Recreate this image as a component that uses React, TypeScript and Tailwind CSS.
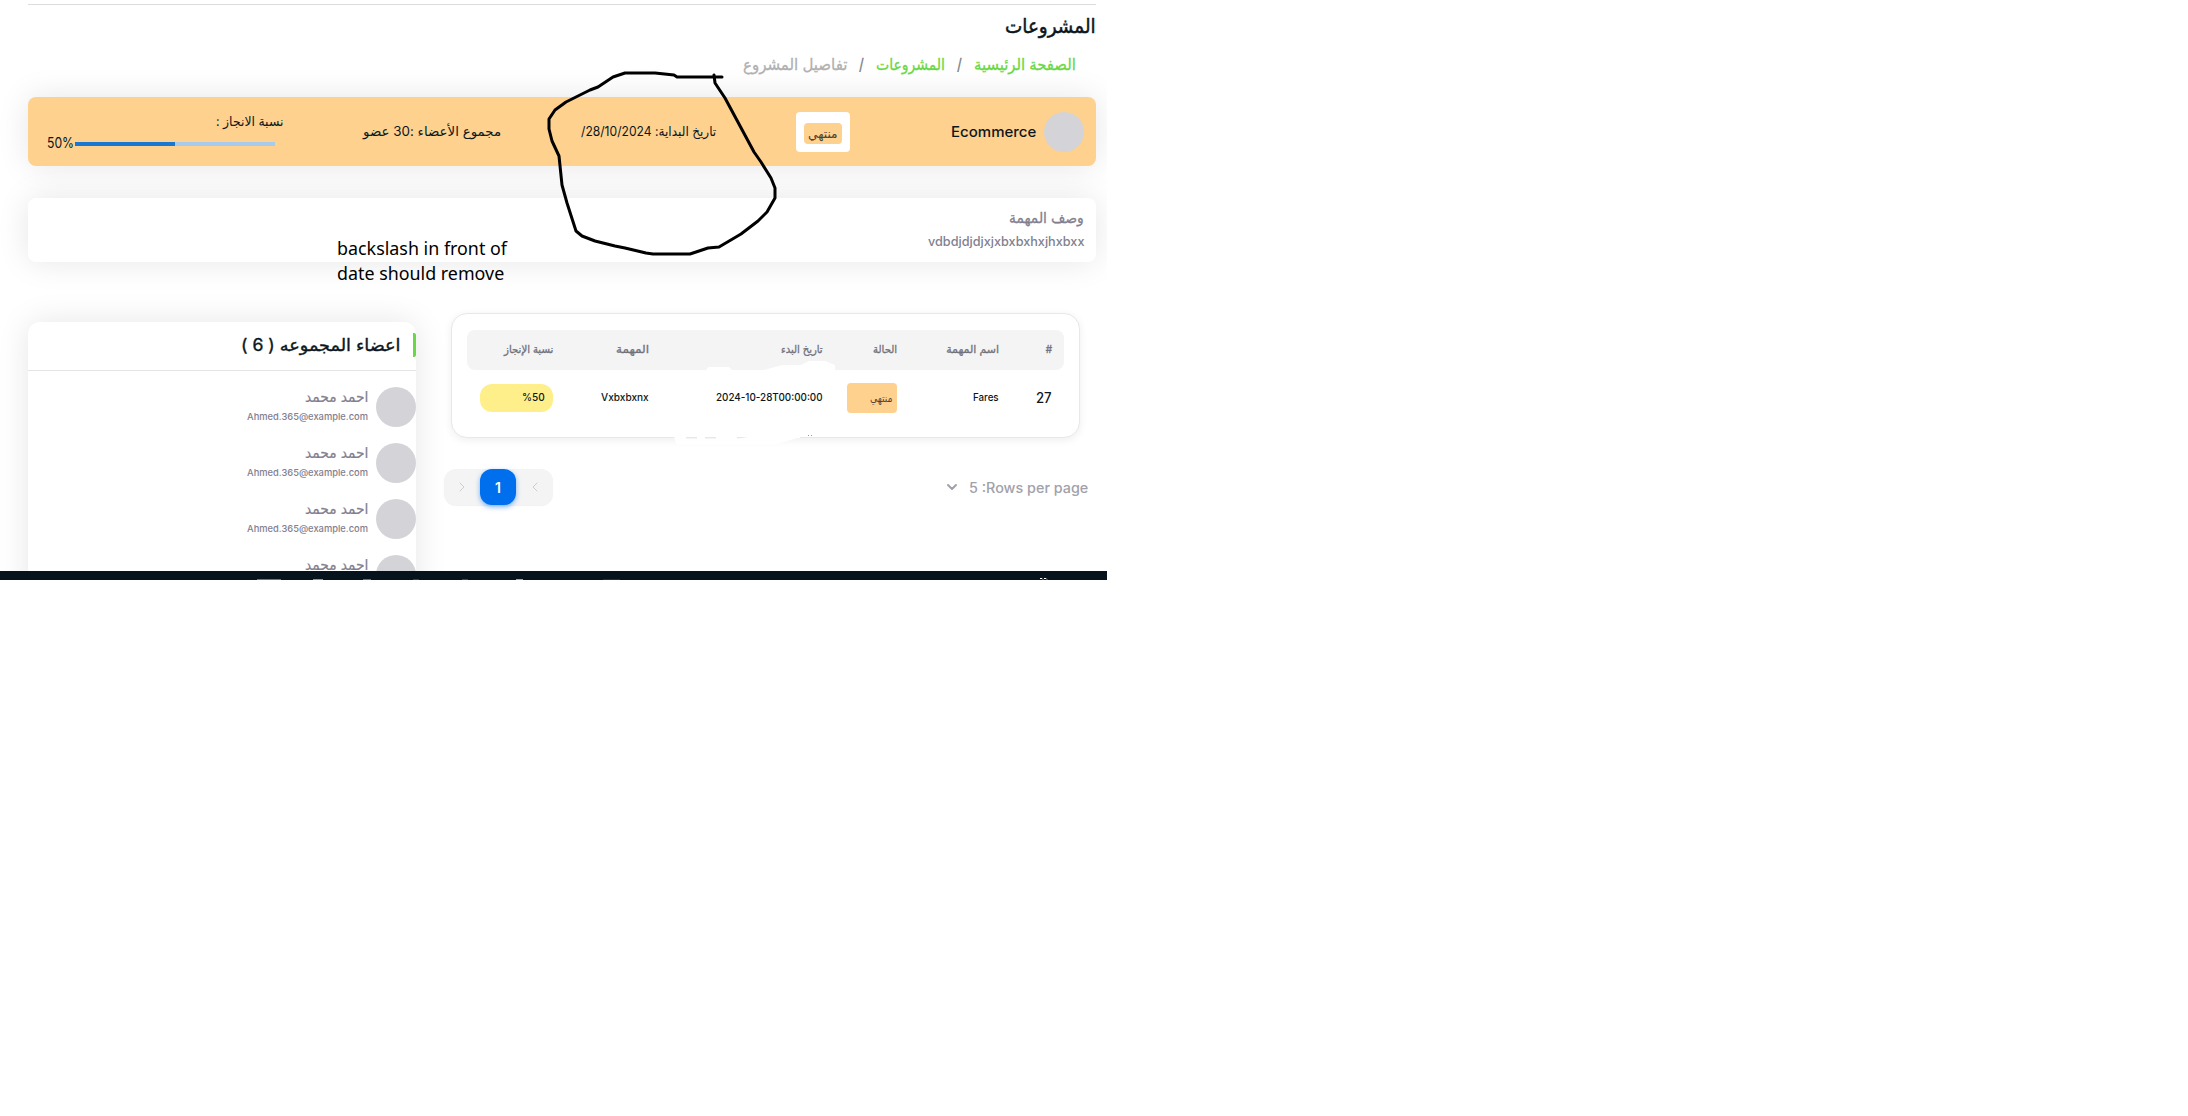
import { useLayoutEffect, useRef, type ReactNode } from "react";
import { ChevronDown, ChevronLeft, ChevronRight } from "lucide-react";

/* One line of text, condensed or widened to fill its box. */
function Fit({ className, children }: { className: string; children: ReactNode }) {
  const box = useRef<HTMLDivElement>(null);
  const text = useRef<HTMLSpanElement>(null);
  useLayoutEffect(() => {
    if (box.current && text.current) {
      text.current.style.transform = `scaleX(${box.current.clientWidth / text.current.offsetWidth})`;
    }
  }, []);
  return (
    <div ref={box} className={`flex shrink-0 justify-start whitespace-nowrap ${className}`}>
      <span ref={text} className="block shrink-0 origin-left rtl:origin-right">
        {children}
      </span>
    </div>
  );
}

const panelShadow = "shadow-[0_0_32px_rgba(0,0,0,0.1)]";

function Member() {
  return (
    <div className="flex h-10 items-center gap-2">
      <div className="size-10 shrink-0 rounded-full bg-[#d4d3d8]" />
      <div className="flex h-10 flex-col text-[#82808f]">
        <Fit className="h-5 w-[63px] text-[15px] leading-5 [-webkit-text-stroke:0.2px]">احمد محمد</Fit>
        <Fit className="h-5 w-[121px] text-[9.5px] leading-5 font-medium">Ahmed.365@example.com</Fit>
      </div>
    </div>
  );
}

export default function App() {
  return (
    <div
      dir="ltr"
      className="relative h-[1116px] w-[2188px] overflow-hidden bg-white font-['Inter','DejaVu_Sans',sans-serif] text-[#0b1720]"
    >
      <div className="h-[580px] w-[1107px] overflow-hidden">
        <div dir="rtl" className="flex h-[571px] w-[1107px] flex-col overflow-hidden pr-[11px] pl-7 pt-1">
          <div className="h-px shrink-0 bg-[#dcdcdc]" />
          <Fit className="mt-[9px] h-6 w-[91px] text-[20px] leading-6 [-webkit-text-stroke:0.5px]">المشروعات</Fit>

          <nav className="mt-[14px] mr-5 mb-px flex h-6 shrink-0 text-[16px] leading-6 text-[#68d845] [-webkit-text-stroke:0.3px]">
            <Fit className="w-[102px]">الصفحة الرئيسية</Fit>
            <Fit className="mr-3 w-[5px] text-[#777f86]">/</Fit>
            <Fit className="mr-3 w-[69px]">المشروعات</Fit>
            <Fit className="mr-3 w-[5px] text-[#777f86]">/</Fit>
            <Fit className="mr-3 w-[104px] text-[#b0b0b0]">تفاصيل المشروع</Fit>
          </nav>

          <section className={`mt-5 flex h-[69px] shrink-0 items-center rounded-lg bg-[#fed18f] pr-3 ${panelShadow}`}>
            <div className="size-10 shrink-0 rounded-full bg-[#d4d3d8]" />
            <Fit className="mr-2 w-[85px] text-[14.5px] leading-6 font-medium">Ecommerce</Fit>
            <div className="mr-[101px] flex h-10 w-[54px] shrink-0 items-center rounded-[4px] bg-white pt-[3px] pr-2">
              <div className="flex h-[21px] w-[38px] items-center justify-center rounded-[4px] bg-[#fed18f]">
                <Fit className="w-[30px] text-[13px] leading-5 text-[#4c4434]">منتهي</Fit>
              </div>
            </div>
            <Fit className="mr-20 w-[135px] pb-0.5 text-[13px] leading-6">تاريخ البداية: 28/10/2024/</Fit>
            <Fit className="mr-20 w-[138px] pb-0.5 text-[13px] leading-6">مجموع الأعضاء :30 عضو</Fit>
            <div className="mr-20 flex h-[69px] w-60 flex-col pt-3">
              <Fit className="h-6 w-[67px] text-[13px] leading-6">نسبة الانجاز :</Fit>
              <div className="mt-[3px] mr-2 flex h-4 items-center">
                <div className="flex h-1 w-[200px] justify-end bg-[#a7caed]">
                  <div className="h-1 w-1/2 bg-[#1976d2]" />
                </div>
                <Fit className="mr-px w-[27px] pb-0.5 text-[14px] leading-5">50%</Fit>
              </div>
            </div>
          </section>

          <section className={`mt-8 h-16 shrink-0 rounded-lg bg-white pt-2 pr-3 text-[#82808f] ${panelShadow}`}>
            <Fit className="w-[75px] text-[15px] leading-6 [-webkit-text-stroke:0.3px]">وصف المهمة</Fit>
            <Fit className="w-[156px] text-[12.5px] leading-6 font-medium">vdbdjdjdjxjxbxbxhxjhxbxx</Fit>
          </section>

          <div className="mt-[51px] flex shrink-0 justify-between">
            <main className="w-[653px] pr-2">
              <div className="mr-2 h-[125px] w-[629px] rounded-2xl border border-[#e8e8e8] bg-white px-[15px] pt-4 shadow-[0_2px_8px_rgba(0,0,0,0.07)]">
                <div className="grid h-10 grid-cols-[53px_102px_74px_174px_96px_98px] items-center rounded-lg bg-[#f4f4f4] pb-px text-[11px] text-[#71717a] [-webkit-text-stroke:0.3px]">
                  <Fit className="mr-3 w-[6px] text-[10px]">#</Fit>
                  <Fit className="mr-3 w-[53px]">اسم المهمة</Fit>
                  <Fit className="mr-3 w-[24px]">الحالة</Fit>
                  <Fit className="mr-3 w-[42px]">تاريخ البدء</Fit>
                  <Fit className="mr-3 w-[33px]">المهمة</Fit>
                  <Fit className="mr-3 w-[49px]">نسبة الإنجاز</Fit>
                </div>
                <div className="grid h-[55px] grid-cols-[53px_102px_74px_174px_96px_98px] items-center text-[10.5px] font-medium">
                  <Fit className="mr-3 w-[16px] text-[14px]">27</Fit>
                  <Fit className="mr-3 w-[26px]">Fares</Fit>
                  <div className="mr-3 mt-px flex h-[30px] w-[50px] items-center rounded-[4px] bg-[#fed18f] pt-0.5 pr-1">
                    <Fit className="w-[23px] text-[#4c4434]">منتهي</Fit>
                  </div>
                  <Fit className="mr-3 w-[107px]">2024-10-28T00:00:00</Fit>
                  <Fit className="mr-3 w-[48px]">Vxbxbxnx</Fit>
                  <div className="mr-3 mt-px flex h-7 w-[73px] items-center rounded-xl bg-[#feef8b] pr-2">
                    <Fit className="w-[23px]">
                      <bdo dir="ltr">%50</bdo>
                    </Fit>
                  </div>
                </div>
              </div>
              <div className="mt-[31px] flex h-9 items-center">
                <Fit className="w-[119px] text-[14px] font-medium text-[#a1a1aa]">
                  <bdi dir="ltr">5 :Rows per page</bdi>
                </Fit>
                <ChevronDown className="mr-[9px] size-4 text-[#a1a1aa]" strokeWidth={3} />
                <div className="mr-auto flex h-9 w-[109px] rounded-xl bg-[#f4f4f4] shadow-[0_1px_1px_rgba(0,0,0,0.06)] -translate-x-px rtl:translate-x-px">
                  <div className="flex w-[37px] items-center justify-center">
                    <ChevronLeft className="size-4 text-[#c4c4c8]" strokeWidth={1.2} />
                  </div>
                  <div className="flex size-9 items-center justify-center rounded-xl bg-[#006fee] text-[14px] font-semibold text-white shadow-[0_2px_5px_rgba(0,111,238,0.5)]">
                    1
                  </div>
                  <div className="flex w-9 items-center justify-center">
                    <ChevronRight className="size-4 text-[#c4c4c8]" strokeWidth={1.2} />
                  </div>
                </div>
              </div>
            </main>

            <aside className={`mt-[9px] h-[400px] w-[388px] shrink-0 rounded-t-xl bg-white ${panelShadow}`}>
              <div className="flex h-[49px] items-center border-b border-[#e4e4e4] pb-0.5">
                <div className="h-6 w-[3px] rounded-r-[2px] bg-[#68d845]" />
                <Fit className="mr-[13px] w-[159px] text-[17px] leading-6 [-webkit-text-stroke:0.4px]">
                  اعضاء المجموعه ( 6 )
                </Fit>
              </div>
              <div className="mt-4 flex flex-col gap-4">
                <Member />
                <Member />
                <Member />
                <Member />
              </div>
            </aside>
          </div>
        </div>

        <footer className="h-[9px] w-[1107px] bg-[#06131c]" />
      </div>

      <div className="absolute top-[235px] left-[337px] font-['Noto_Sans',sans-serif] text-[18.5px] leading-[25px] text-black">
        <Fit className="w-[170px]">backslash in front of</Fit>
        <Fit className="w-[167px]">date should remove</Fit>
      </div>

      <svg className="absolute top-0 left-0" width="1107" height="580" viewBox="0 0 1107 580" fill="none">
        {/* Erased areas over the table */}
        <path
          d="M706 371 708 367H729L732 370H764L782 365H801L809 361H825L835 365V371Z M674 436H686V439H697V436H705V439H716V436H737V439L753 436H800L797 438L777 444H676Z"
          fill="#fff"
        />
        <path d="M674 435H686V437H674ZM697 435H705V437H697ZM716 435H737V437H716ZM753 435H800V438H753Z" fill="#fff" />
        <path d="M808 435.5H809M811 435.5H812" stroke="#999" />
        {/* Freehand marker loop */}
        <path
          d="M722 77H677L674 75 655 73H625L613 77 598 87 590 90 566 102 555 110 549 119V129L552 141 559 156 562 185 567 203 576 231 582 236 595 241 615 246 625 248 646 253 653 254H690L708 248 719 247 741 234 758 221 767 212 775 198V188L771 178 761 162 754 152 725 98 715 83 714 75"
          stroke="#000"
          strokeWidth="3"
          strokeLinecap="round"
          strokeLinejoin="round"
        />
        {/* Icon tops peeking out of the dark strip */}
        <path d="M257 579.5H281" stroke="#e8442f" />
        <path d="M313 579.5H323" stroke="#35b4cd" />
        <path d="M363 579.5H371" stroke="#f0391e" />
        <path d="M413 579.5H419" stroke="#3c4146" />
        <path d="M462 579.5H468" stroke="#9c1f35" />
        <path d="M516 579.5H523" stroke="#5cb8ea" />
        <path d="M603 579.5H620" stroke="#1b3148" />
        <path d="M1040 578.5H1042L1043 579.5M1044 578.5H1046L1047 579.5" stroke="#fff" />
      </svg>
    </div>
  );
}
